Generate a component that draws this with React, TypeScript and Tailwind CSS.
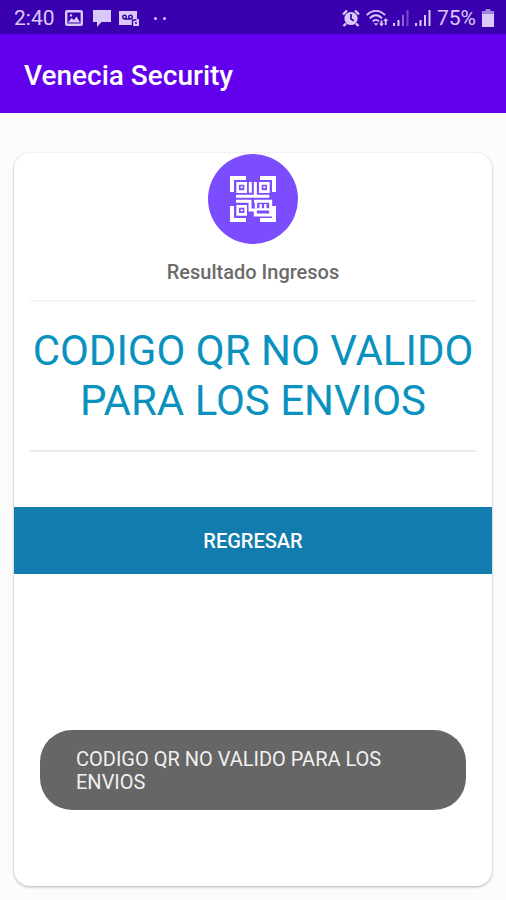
import type { FormEvent } from "react";

const MESSAGE = "CODIGO QR NO VALIDO PARA LOS ENVIOS";

function ImageIcon() {
  return (
    <svg viewBox="0 0 18 16" className="h-4 w-[18px]" aria-hidden="true">
      <rect x="1.2" y="1.2" width="15.6" height="13.6" rx="1" fill="none" stroke="currentColor" strokeWidth="2.4" />
      <path d="M3 12.5 6.5 8l2.5 2 2.5-3.5 3.5 6Z" fill="currentColor" />
      <circle cx="6" cy="5.4" r="1.2" fill="currentColor" />
    </svg>
  );
}

function ChatIcon() {
  return (
    <svg viewBox="0 0 18 18" className="h-[18px] w-[18px]" aria-hidden="true">
      <path d="M0 1h18v12H8.500L4 18v-5H0Z" fill="currentColor" />
    </svg>
  );
}

function VoicemailIcon() {
  return (
    <svg viewBox="0 0 21 17" className="h-[17px] w-[21px]" aria-hidden="true">
      <path d="M0 1h18v8h2v7h-6v-1H0Z" fill="currentColor" />
      <g fill="none" stroke="#3a00b0" strokeWidth="1.4">
        <circle cx="5.5" cy="7" r="1.8" />
        <circle cx="11.5" cy="7" r="1.8" />
        <path d="M5.500 9h6M13.500 15v-5h4M16 13h2" />
      </g>
    </svg>
  );
}

function AlarmIcon() {
  return (
    <svg viewBox="0 0 18 18" className="h-[18px] w-[18px]" aria-hidden="true">
      <circle cx="9" cy="9.5" r="6.6" fill="currentColor" />
      <path d="M1 5.500 5 1.500M17 5.500 13 1.500M4 14.500l-2.500 2.500M14 14.500l2.500 2.500" stroke="currentColor" strokeWidth="2.4" />
      <path d="M9 5v5l2.800 1.800" fill="none" stroke="#3a00b0" strokeWidth="1.7" />
    </svg>
  );
}

function WifiIcon() {
  return (
    <svg viewBox="0 0 23 18" className="h-[18px] w-[23px]" aria-hidden="true">
      <g fill="none" stroke="currentColor" strokeWidth="1.9">
        <path d="M.8 6.200C6 .4 14 .4 19 6.200" />
        <path d="M3.800 9.400C7.500 5.200 12.300 5.200 16 9.400" />
        <path d="M6.800 12.500c2-2.200 4.400-2.200 6.300 0" />
      </g>
      <path
        d="m10 16.800-2.200-2.500h4.400ZM15.500 17.500l-2.500-3h1.600v-3h1.800v3H18ZM19.700 9l2.500 3h-1.600v4h-1.800v-4h-1.600Z"
        fill="currentColor"
      />
    </svg>
  );
}

function SignalIcon({ dim }: { dim?: boolean }) {
  return (
    <svg viewBox="0 0 16 18" className="h-[18px] w-4" aria-hidden="true">
      <path d="M0 14h2v3H0ZM4.500 11h2v6h-2Z" fill="currentColor" />
      <path d="M9 6h2v11H9Z" fill="currentColor" opacity={dim ? 0.5 : 1} />
      <path d="M13.500 1h2v16h-2Z" fill="currentColor" opacity={dim ? 0.35 : 1} />
    </svg>
  );
}

function BatteryIcon() {
  return (
    <svg viewBox="0 0 12 18" className="h-[18px] w-3" aria-hidden="true">
      <path d="M3.500 0h5v2H12v3H0V2h3.500Z" fill="currentColor" opacity=".65" />
      <path d="M0 5h12v13H0Z" fill="currentColor" />
    </svg>
  );
}

function QrLogo() {
  return (
    <svg viewBox="0 0 138 138" className="size-[46px]" aria-hidden="true">
      <g fill="none" stroke="#fff">
        {/* corner brackets */}
        <path d="M6 48V6h42M90 6h42v42M6 90v42h42M90 132h42V90" strokeWidth="12" />
        {/* finder squares */}
        <path d="M23 22h24v25H23ZM91 22h24v25H91ZM23 91h24v24H23Z" strokeWidth="8" />
        {/* modules */}
        <path d="M61 18v32M76 18v44M18 61h62M76 61h42" strokeWidth="9" />
        <path d="M18 76h42v26h16v15h46V76H72" strokeWidth="9" />
        <path d="M78 76v20M92 84v14M106 84v14M76 100h46" strokeWidth="7" />
      </g>
      <path d="M32 31h6v6h-6ZM100 31h6v6h-6ZM32 100h6v6h-6Z" fill="#fff" />
    </svg>
  );
}

function StatusBar() {
  return (
    <div className="flex h-[34px] items-center justify-between bg-[#3a00b0] pt-0.5 pr-3 pl-3.5 text-[#d9c9f8]">
      <div className="flex items-center gap-2.5">
        <span className="text-[21px] leading-6">2:40</span>
        <ImageIcon />
        <div className="flex items-center gap-2">
          <ChatIcon />
          <VoicemailIcon />
        </div>
        <span className="ml-1 flex gap-1.5">
          <i className="size-[3px] rounded-full bg-current" />
          <i className="size-[3px] rounded-full bg-current" />
        </span>
      </div>
      <div className="flex items-center gap-1.5">
        <AlarmIcon />
        <div className="flex items-center gap-1">
          <WifiIcon />
          <SignalIcon dim />
        </div>
        <SignalIcon />
        <span className="text-[21px] leading-6">75%</span>
        <BatteryIcon />
      </div>
    </div>
  );
}

export default function App() {
  const handleSubmit = (e: FormEvent) => {
    e.preventDefault();
  };

  return (
    <div className="flex min-h-screen flex-col bg-[#fcfcfc] font-['Roboto',sans-serif]">
      <StatusBar />
      <header className="flex h-[79px] items-center bg-[#6200ee] px-6 pt-1">
        <h1 className="text-[28px] leading-8 font-medium text-white">Venecia Security</h1>
      </header>

      <main className="flex flex-1 flex-col px-3.5 pt-10 pb-3.5">
        <form
          onSubmit={handleSubmit}
          className="flex flex-1 flex-col rounded-2xl bg-white shadow-[0_1px_3px_rgba(0,0,0,0.3)]"
        >
          <div className="mt-px flex size-[90px] items-center justify-center self-center rounded-full bg-[#7c4dff]">
            <QrLogo />
          </div>
          <h2 className="mt-4 text-center text-[20px] leading-6 font-medium text-[#6b6b6b]">Resultado Ingresos</h2>
          <hr className="mx-4 mt-4 border-t-2 border-[#f4f4f4]" />
          <p className="mt-6 text-center text-[42px] leading-[50px] text-[#0a92be]">{MESSAGE}</p>
          <hr className="mx-4 mt-6 border-t-2 border-[#ececec]" />
          <button
            type="submit"
            className="mt-[55px] h-[67px] w-full bg-[#117cad] text-[20px] leading-6 font-medium text-white"
          >
            REGRESAR
          </button>
        </form>
      </main>

      {/* Toast */}
      <div
        role="status"
        className="fixed inset-x-10 bottom-[90px] rounded-[32px] bg-[#666] pt-[18px] pr-16 pb-4 pl-9 text-[20px] leading-[23px] text-[#f1f1f1]"
      >
        {MESSAGE}
      </div>
    </div>
  );
}
